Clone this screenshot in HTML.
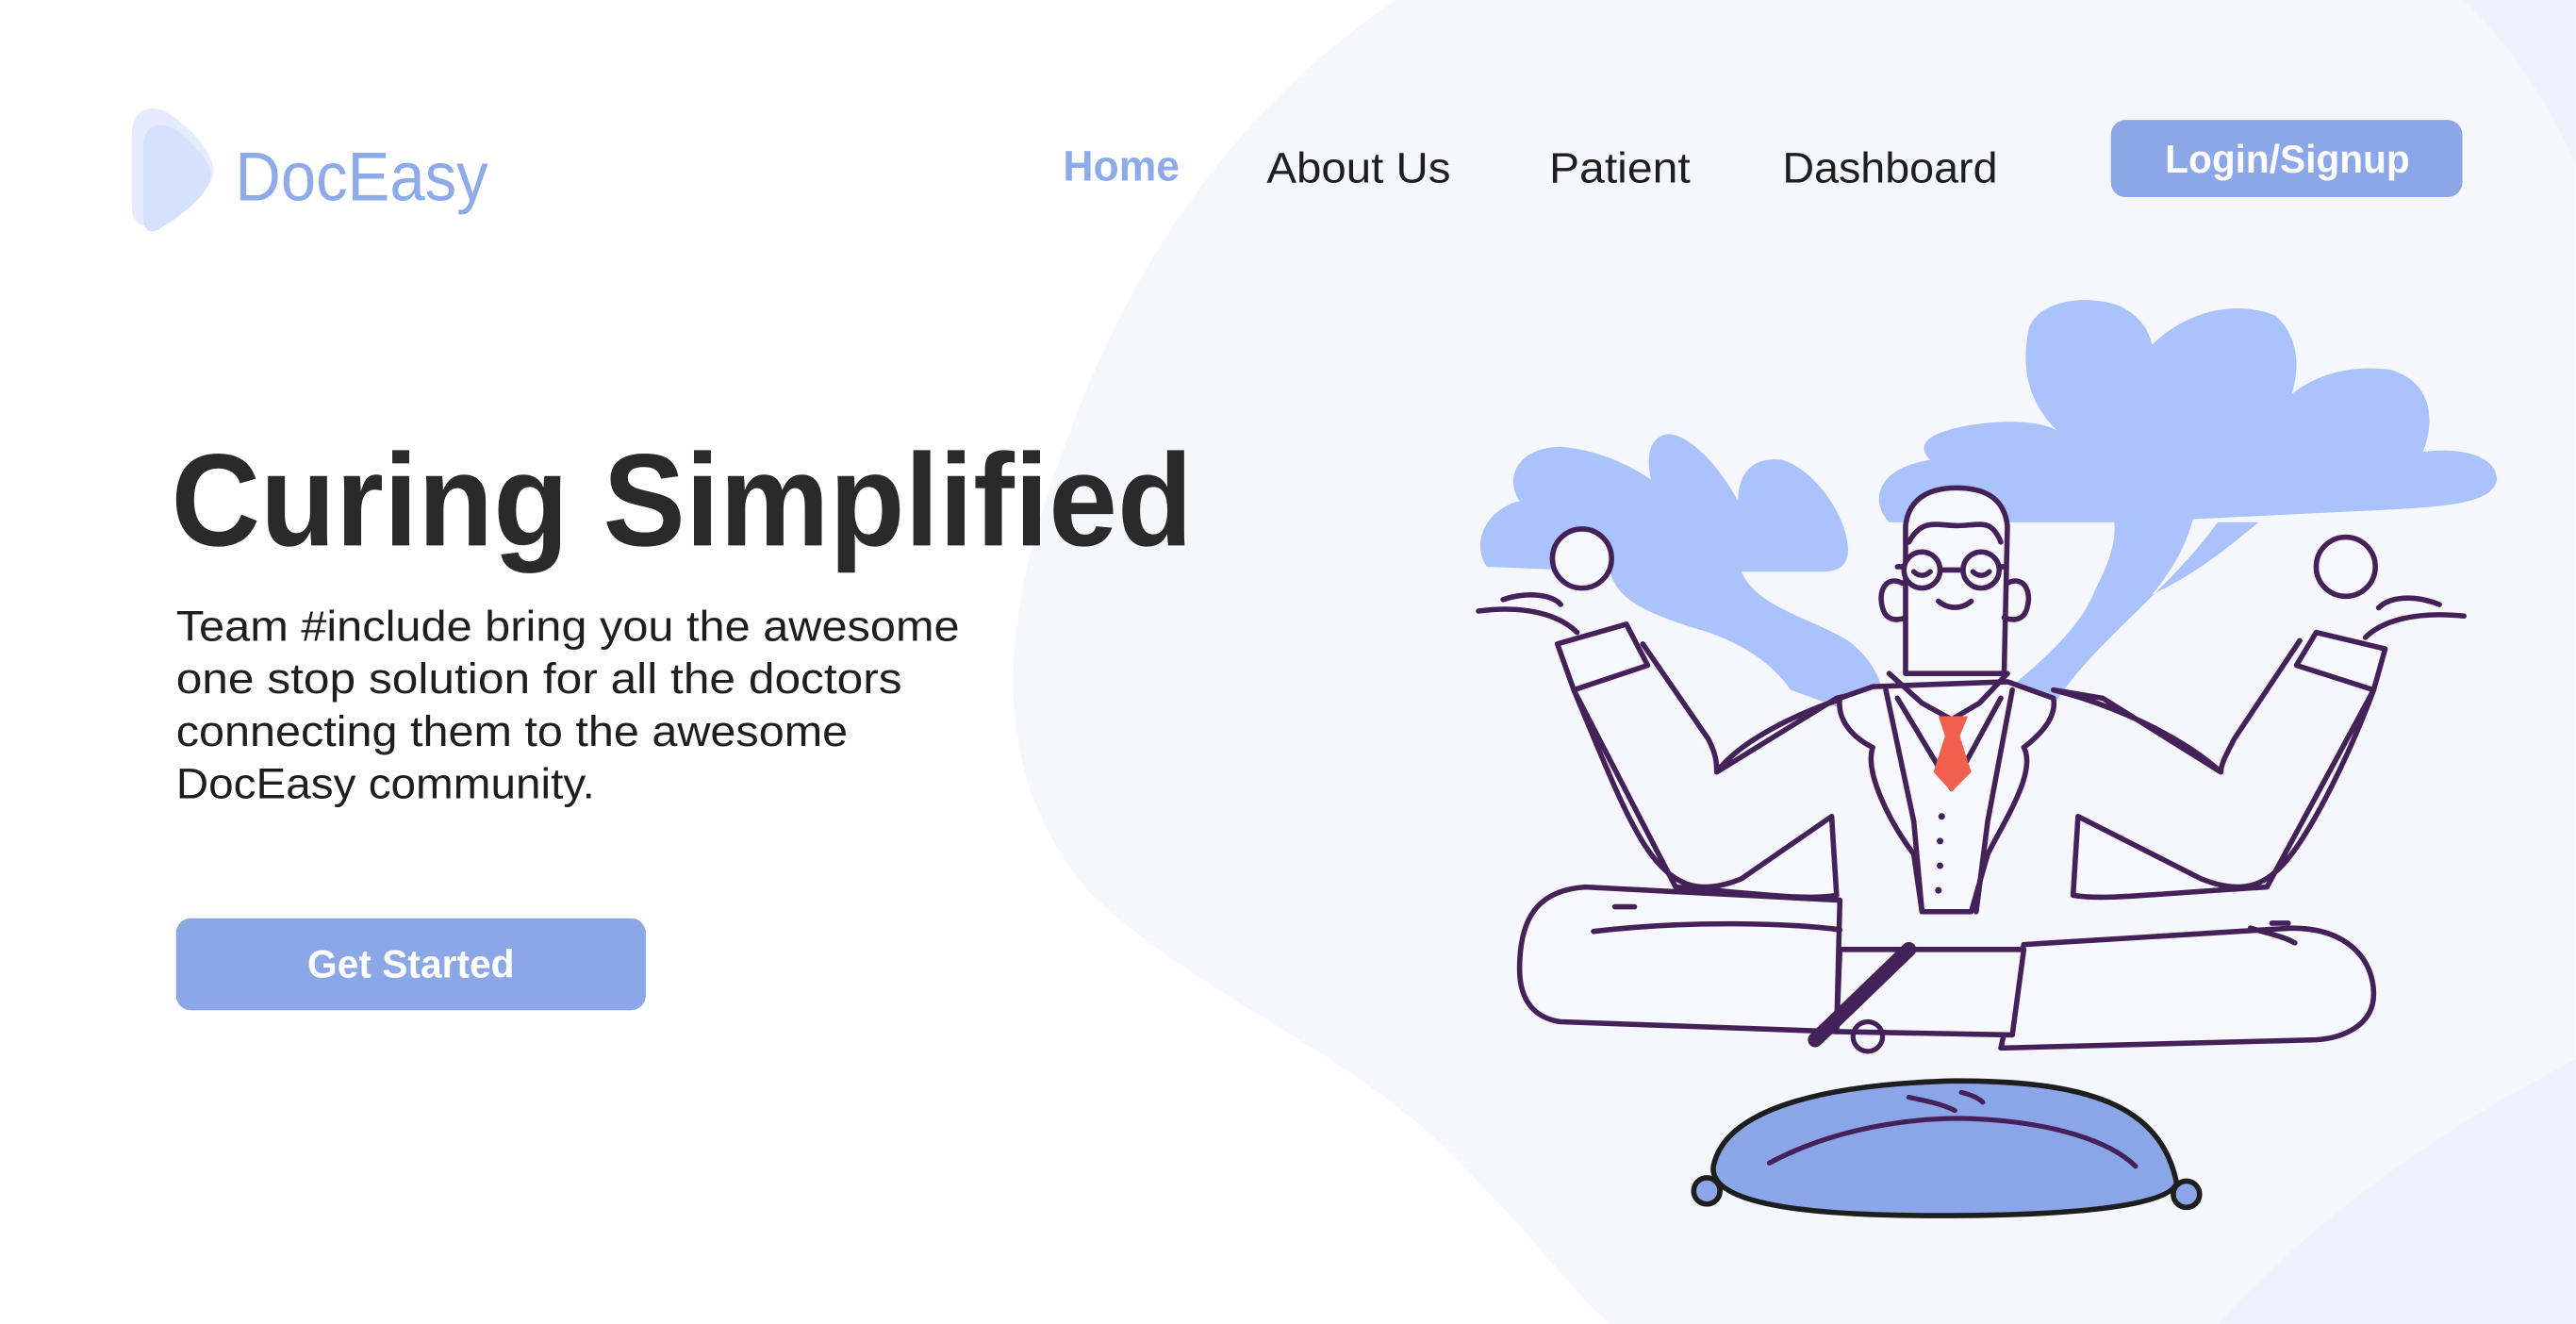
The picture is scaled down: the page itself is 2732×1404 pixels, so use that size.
<!DOCTYPE html>
<html><head><meta charset="utf-8"><style>
html,body{margin:0;padding:0;background:#fff;}
svg{display:block;}
text{font-family:"Liberation Sans",sans-serif;}
</style></head><body>
<svg width="2732" height="1404" viewBox="0 0 1568 806" xmlns="http://www.w3.org/2000/svg">
<rect width="1568" height="806" fill="#ffffff"/>
<path d="M850 0 C760 60 690 150 645 280 C605 390 605 470 660 540 C730 610 830 640 900 720 C940 760 960 790 980 806 L1568 806 L1568 0 Z" fill="#f6f7fd"/>
<path d="M1500 0 C1530 30 1550 60 1568 100 L1568 0 Z" fill="#eef2fd"/>
<path d="M1350 806 C1420 730 1500 680 1568 645 L1568 806 Z" fill="#eef2fd"/>

<!-- logo -->
<path d="M80 82 C80 66 92 62 104 70 C118 80 128 92 130 103 C130 115 115 128 95 136 C84 140 80 134 80 125 Z" fill="#e4ebfd"/>
<path d="M87 90 C87 76 97 72 108 80 C120 90 128 98 128 106 C128 118 112 130 96 140 C89 143 87 138 87 130 Z" fill="#d6e2fd"/>
<text x="143" y="122" font-size="42" fill="#8eaae9" textLength="154" lengthAdjust="spacingAndGlyphs">DocEasy</text>

<!-- nav -->
<text x="647" y="110" font-size="26" font-weight="bold" fill="#8eaae9" textLength="71" lengthAdjust="spacingAndGlyphs">Home</text>
<text x="771" y="111" font-size="26" fill="#1e1e1e" textLength="112" lengthAdjust="spacingAndGlyphs">About Us</text>
<text x="943" y="111" font-size="26" fill="#1e1e1e" textLength="86" lengthAdjust="spacingAndGlyphs">Patient</text>
<text x="1085" y="111" font-size="26" fill="#1e1e1e" textLength="131" lengthAdjust="spacingAndGlyphs">Dashboard</text>
<rect x="1285" y="73" width="214" height="47" rx="9" fill="#8ca7e8"/>
<text x="1318" y="105" font-size="24" font-weight="bold" fill="#ffffff" textLength="149" lengthAdjust="spacingAndGlyphs">Login/Signup</text>

<!-- hero -->
<text x="104" y="332" font-size="80" font-weight="bold" fill="#2a2a2a" textLength="622" lengthAdjust="spacingAndGlyphs">Curing Simplified</text>
<g font-size="26" fill="#1e1e1e">
<text x="107" y="390" textLength="477" lengthAdjust="spacingAndGlyphs">Team #include bring you the awesome</text>
<text x="107" y="422" textLength="442" lengthAdjust="spacingAndGlyphs">one stop solution for all the doctors</text>
<text x="107" y="454" textLength="409" lengthAdjust="spacingAndGlyphs">connecting them to the awesome</text>
<text x="107" y="486" textLength="255" lengthAdjust="spacingAndGlyphs">DocEasy community.</text>
</g>
<rect x="107" y="559" width="286" height="56" rx="9" fill="#8ca7e8"/>
<text x="187" y="595" font-size="24" font-weight="bold" fill="#ffffff" textLength="126" lengthAdjust="spacingAndGlyphs">Get Started</text>

<!-- clouds -->
<g fill="#aac3fc">
<path d="M905 345 C895 330 905 310 925 305 C915 290 925 272 950 272 C975 274 995 285 1005 292 C1000 270 1010 262 1020 265 C1035 270 1050 290 1058 305 C1058 285 1070 278 1085 280 C1105 286 1125 315 1125 335 C1125 345 1118 348 1110 348 L1060 348 C1070 370 1100 375 1125 390 C1145 405 1150 425 1145 440 L1090 420 C1080 405 1060 390 1030 382 C1000 372 985 365 980 348 Z"/>
<path d="M1150 318 C1138 305 1142 285 1175 280 C1165 270 1175 262 1205 258 C1230 255 1245 258 1252 262 C1235 245 1230 225 1235 200 C1240 185 1265 178 1290 186 C1302 192 1308 200 1310 210 C1330 190 1360 182 1385 192 C1400 205 1400 225 1395 240 C1410 228 1430 222 1455 225 C1480 232 1483 255 1475 275 C1500 272 1520 278 1520 292 C1518 305 1495 308 1460 310 L1335 316 C1330 335 1320 350 1310 362 C1340 348 1360 330 1375 318 L1350 318 C1320 360 1270 395 1250 430 L1210 430 C1240 405 1265 385 1275 360 C1285 340 1288 330 1287 318 Z"/>
</g>

<!-- figure -->
<g stroke="#45215a" stroke-width="3.2" stroke-linecap="round" stroke-linejoin="round" fill="#f7f8fd">
<!-- legs -->
<path d="M1120 548 L965 540 C935 542 925 560 925 590 C925 610 935 620 950 622 L1118 628 Z"/>
<path d="M1232 575 L1395 565 C1430 565 1445 585 1445 605 C1445 625 1425 632 1410 633 L1218 638 Z"/>
<path d="M1120 578 L1232 578 L1225 630 L1118 628 Z"/>
<path d="M970 567 C1030 560 1090 562 1120 566 M983 552 L995 552 M1370 565 C1380 568 1390 570 1397 574 M1383 562 L1393 562" fill="none"/>
<!-- arms -->
<path d="M958 420 C975 460 990 500 1005 520 C1020 540 1035 545 1060 535 L1115 497 L1118 545 C1100 548 1080 545 1020 540 Z"/>
<path d="M1000 392 L1040 450 C1045 460 1045 465 1045 470 L1118 425 L1140 420 C1100 430 1060 450 1045 470"/>
<path d="M1445 420 C1430 460 1410 500 1395 520 C1380 540 1365 545 1340 535 L1265 497 L1262 545 C1280 548 1300 545 1380 540 Z"/>
<path d="M1400 390 L1360 450 C1355 460 1352 465 1352 470 L1280 425 L1250 420 C1290 430 1330 450 1352 470"/>
<!-- torso -->
<path d="M1140 418 L1120 425 C1118 440 1130 450 1140 455 C1135 470 1150 500 1165 520 L1170 555 L1200 555 L1210 520 C1220 500 1240 470 1232 455 C1245 445 1252 435 1250 425 L1222 415 Z"/>
<path d="M1148 420 L1165 500 L1170 555 M1225 420 L1210 500 L1203 555 M1155 425 L1188 480 L1218 425" fill="none"/>
<path d="M1150 410 L1170 428 L1188 438 L1205 428 L1222 410" fill="none"/>
<!-- cuffs -->
<path d="M948 392 L990 380 L1003 405 L958 420 Z"/>
<path d="M1452 395 L1410 385 L1398 405 L1445 420 Z"/>
<!-- hands -->
<circle cx="963" cy="340" r="18"/>
<path d="M900 372 C930 368 950 375 960 385 M915 365 C930 360 945 362 950 368" fill="none"/>
<circle cx="1428" cy="345" r="18"/>
<path d="M1500 375 C1470 372 1450 378 1440 388 M1485 368 C1470 362 1455 363 1448 370" fill="none"/>
<!-- head -->
<path d="M1160 410 L1160 320 C1162 303 1175 297 1191 297 C1208 297 1220 303 1222 320 L1220 410 Z"/>
<path d="M1162 330 C1170 315 1180 320 1191 320 C1205 320 1212 315 1218 330" fill="none"/>
<path d="M1158 355 C1148 350 1143 360 1146 370 C1148 378 1155 378 1160 376 M1222 355 C1232 350 1237 360 1234 370 C1232 378 1225 378 1220 376" fill="none"/>
<circle cx="1170" cy="347" r="11"/>
<circle cx="1206" cy="347" r="11"/>
<path d="M1181 347 L1195 347 M1159 345 L1155 345 M1217 345 L1221 345 M1165 348 C1168 351 1172 351 1175 348 M1201 348 C1204 351 1208 351 1211 348 M1180 366 C1186 371 1194 371 1200 366" fill="none"/>
</g>
<path d="M1180 436 L1198 436 L1193 448 L1200 470 L1188 482 L1177 470 L1184 448 Z" fill="#f0604d"/>
<g fill="#45215a"><circle cx="1182" cy="497" r="2"/><circle cx="1181" cy="512" r="2"/><circle cx="1181" cy="527" r="2"/><circle cx="1180" cy="542" r="2"/></g>
<path d="M1105 633 L1162 578" stroke="#45215a" stroke-width="9" stroke-linecap="round"/>
<circle cx="1137" cy="631" r="9" fill="none" stroke="#45215a" stroke-width="3"/>

<!-- cushion -->
<g stroke="#1e1e1e" stroke-width="3.2" fill="#8ba6e8">
<circle cx="1039" cy="725" r="8"/>
<circle cx="1331" cy="727" r="8"/>
<path d="M1043 710 C1050 675 1110 660 1190 658 C1270 658 1315 672 1325 720 C1320 738 1230 740 1180 740 C1110 740 1040 735 1043 710 Z"/>
</g>
<path d="M1077 708 C1120 685 1170 680 1200 681 C1250 683 1285 695 1300 710 M1162 668 C1172 670 1182 672 1190 676 M1194 665 C1198 666 1204 668 1207 671" stroke="#45215a" stroke-width="3" fill="none" stroke-linecap="round"/>
</svg>
</body></html>
